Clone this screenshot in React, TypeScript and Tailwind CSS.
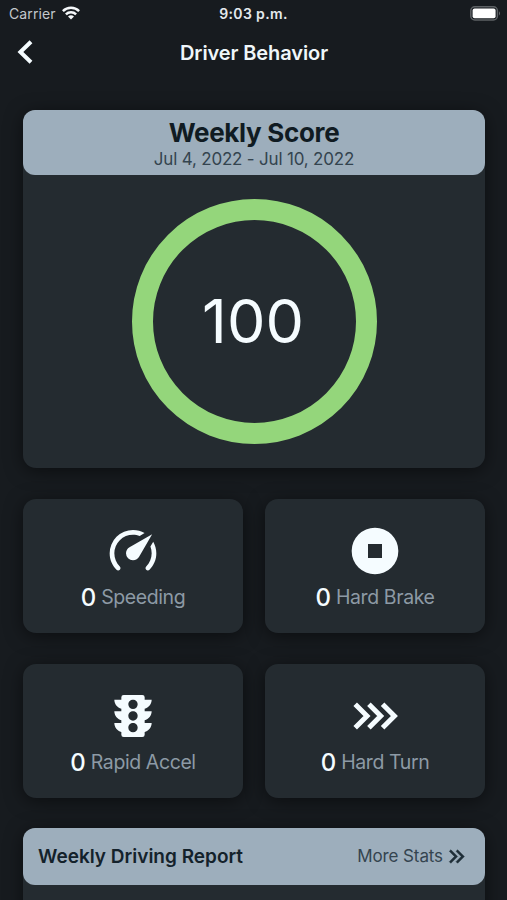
import type { ReactNode } from "react";

const SPEEDOMETER =
  "M12,16A3,3 0 0,1 9,13C9,11.88 9.61,10.9 10.5,10.39L20.21,4.77L14.68,14.35C14.18,15.33 13.17,16 12,16M12,3C13.81,3 15.5,3.5 16.97,4.32L14.87,5.53C14,5.19 13,5 12,5A8,8 0 0,0 4,13C4,15.21 4.89,17.21 6.34,18.65H6.35C6.74,19.04 6.74,19.67 6.35,20.06C5.96,20.45 5.32,20.45 4.93,20.07V20.07C3.12,18.26 2,15.76 2,13A10,10 0 0,1 12,3M22,13C22,15.76 20.88,18.26 19.07,20.07V20.07C18.68,20.45 18.05,20.45 17.66,20.06C17.27,19.67 17.27,19.04 17.66,18.65V18.65C19.11,17.2 20,15.21 20,13C20,12 19.81,11 19.46,10.1L20.67,8C21.5,9.5 22,11.18 22,13Z";
const STOP_CIRCLE = "M12,2A10,10 0 0,0 2,12A10,10 0 0,0 12,22A10,10 0 0,0 22,12A10,10 0 0,0 12,2M9,9H15V15H9";
const TRAFFIC_LIGHT =
  "M12,9A2,2 0 0,1 10,7C10,5.89 10.9,5 12,5C13.11,5 14,5.89 14,7A2,2 0 0,1 12,9M12,14A2,2 0 0,1 10,12C10,10.89 10.9,10 12,10C13.11,10 14,10.89 14,12A2,2 0 0,1 12,14M12,19A2,2 0 0,1 10,17C10,15.89 10.9,15 12,15C13.11,15 14,15.89 14,17A2,2 0 0,1 12,19M20,10H17V8.86C18.72,8.41 20,6.86 20,5H17V4A1,1 0 0,0 16,3H8A1,1 0 0,0 7,4V5H4C4,6.86 5.28,8.41 7,8.86V10H4C4,11.86 5.28,13.41 7,13.86V15H4C4,16.86 5.28,18.41 7,18.86V20A1,1 0 0,0 8,21H16A1,1 0 0,0 17,20V18.86C18.72,18.41 20,16.86 20,15H17V13.86C18.72,13.41 20,11.86 20,10Z";
const DOUBLE_RIGHT =
  "M5.59,7.41L7,6L13,12L7,18L5.59,16.59L10.17,12L5.59,7.41M11.59,7.41L13,6L19,12L13,18L11.59,16.59L16.17,12L11.59,7.41Z";

function Glyph({ d }: { d: string }) {
  return (
    <svg viewBox="0 0 24 24" className="size-14" fill="currentColor" fillRule="evenodd">
      <path d={d} />
    </svg>
  );
}

function StatusBar() {
  return (
    <div className="grid h-7 grid-cols-3 items-center px-2 text-[#e4e9ed]">
      <div className="flex items-center gap-1.5 pl-px">
        <span className="text-[14px] leading-7 tracking-[0.1px] text-[#c3c8cc]">Carrier</span>
        <svg viewBox="0 0 18 14" className="mb-0.5 h-3.5 w-[18px]" fill="none" stroke="#f5f8fa" strokeWidth="2.5">
          <path d="M0.9 5.1a11.6 11.6 0 0 1 16.2 0" />
          <path d="M3.9 8.3a7.3 7.3 0 0 1 10.2 0" />
          <path d="M9 13.6L6 10.6a4.3 4.3 0 0 1 6 0z" fill="#f5f8fa" stroke="none" />
        </svg>
      </div>
      <span className="text-center text-[14px] leading-7 font-semibold tracking-[0.35px]">9:03 p.m.</span>
      <div className="-mr-0.5 flex justify-end pb-0.5">
        <svg viewBox="0 0 31 15" className="h-[15px] w-[31px]">
          <rect x="0.8" y="0.8" width="26.6" height="13.2" rx="4" fill="none" stroke="#5d6164" strokeWidth="1.5" />
          <rect x="2.6" y="2.6" width="23" height="9.6" rx="2" fill="#fff" />
          <path d="M29 5.2q1.9 2.2 0 4.4z" fill="#6b6f72" />
        </svg>
      </div>
    </div>
  );
}

function Tile({ label, children }: { label: string; children: ReactNode }) {
  return (
    <div className="flex h-[134px] flex-col items-center rounded-[13px] bg-[#242b30] pt-6 text-[#f5fcff] shadow-[0_3px_18px_rgba(0,0,0,0.5)]">
      {children}
      <div className="flex items-baseline gap-[5px] leading-[34px]">
        <span className="translate-y-[1.5px] text-[24px] font-medium">0</span>
        <span className="text-[19.5px] tracking-[-0.4px] text-[#8d9aa5]">{label}</span>
      </div>
    </div>
  );
}

export default function App() {
  return (
    <main className="h-[900px] w-[507px] overflow-hidden bg-[#171b1f] font-[Inter,'Liberation_Sans',sans-serif]">
      <StatusBar />
      <header className="grid h-12 grid-cols-[80px_1fr_79px] items-center">
        <svg viewBox="0 0 16 24" className="ml-[17px] h-6 w-4" fill="none" stroke="#f5fcff" strokeWidth="4">
          <path d="M14 1.8L3.4 12L14 22.2" />
        </svg>
        <h1 className="pt-0.5 text-center text-[20px] font-semibold tracking-[-0.1px] text-[#f0f7fa]">Driver Behavior</h1>
      </header>

      <section className="mt-[34px] ml-[23px] h-[357.5px] w-[462px] rounded-[13px] bg-[#242b30] shadow-[0_3px_18px_rgba(0,0,0,0.5)]">
        <div className="flex h-[65px] flex-col items-center rounded-[12px] bg-[#9daebc] pt-[7px]">
          <h2 className="text-[26px] leading-8 font-bold tracking-[-0.33px] text-[#101b22]">Weekly Score</h2>
          <p className="text-[17px] leading-5 tracking-[-0.19px] text-[#34444f]">Jul 4, 2022 - Jul 10, 2022</p>
        </div>
        <div className="mx-auto mt-6 flex size-[245px] items-center justify-center rounded-full border-[21.5px] border-[#94d67b]">
          <span className="-ml-0.5 text-[61px] leading-none text-[#f5fcff]">100</span>
        </div>
      </section>

      <section className="mt-[31.5px] ml-[23px] grid w-[462px] grid-cols-2 gap-x-[22px] gap-y-[31px]">
        <Tile label="Speeding">
          <Glyph d={SPEEDOMETER} />
        </Tile>
        <Tile label="Hard Brake">
          <Glyph d={STOP_CIRCLE} />
        </Tile>
        <Tile label="Rapid Accel">
          <Glyph d={TRAFFIC_LIGHT} />
        </Tile>
        <Tile label="Hard Turn">
          <svg viewBox="0 0 56 56" className="size-14" fill="none" stroke="currentColor" strokeWidth="5">
            <path d="M8.2 16.2L20 28L8.2 39.8M21.9 16.2L33.7 28L21.9 39.8M35.6 16.2L47.4 28L35.6 39.8" />
          </svg>
        </Tile>
      </section>

      <section className="mt-[30px] ml-[23px] h-[200px] w-[462px] rounded-[13px] bg-[#242b30] shadow-[0_3px_18px_rgba(0,0,0,0.5)]">
        <div className="flex h-[57px] items-center justify-between rounded-[12px] bg-[#9daebc] pr-[15px] pl-[15px]">
          <h2 className="pt-0.5 text-[19px] font-semibold text-[#14222b]">Weekly Driving Report</h2>
          <div className="flex items-center">
            <span className="text-[17px] tracking-[-0.1px] text-[#34444f]">More Stats</span>
            <svg viewBox="0 0 24 24" className="size-[27px]" fill="#1f2e38" stroke="#1f2e38" strokeWidth="0.4">
              <path d={DOUBLE_RIGHT} />
            </svg>
          </div>
        </div>
      </section>
    </main>
  );
}
